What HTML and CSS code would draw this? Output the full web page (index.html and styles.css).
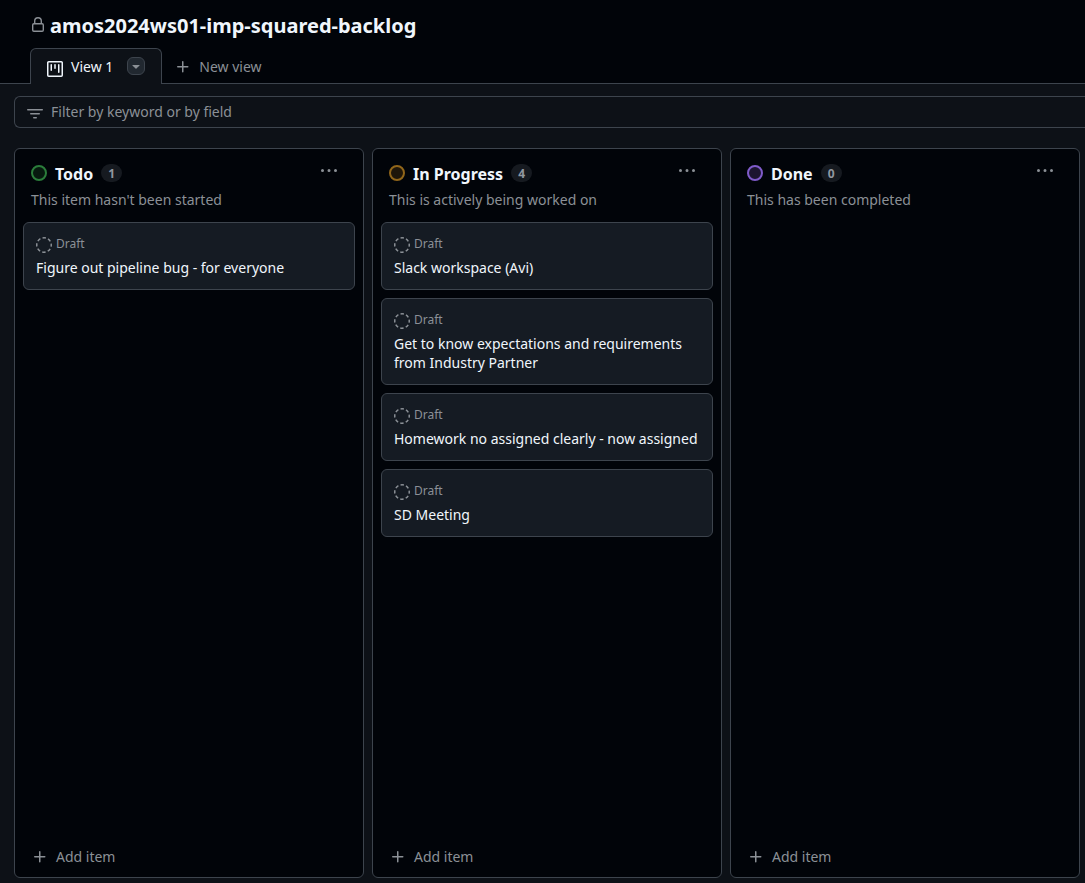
FILE: index.html
```html
<!DOCTYPE html>
<html lang="en">
<head>
<meta charset="utf-8">
<meta name="viewport" content="width=device-width, initial-scale=1">
<title>amos2024ws01-imp-squared-backlog</title>
<link rel="stylesheet" href="styles.css">
</head>
<body>
<svg class="sprite" aria-hidden="true">
  <symbol id="plus" viewBox="0 0 16 16"><path d="M7.75 2a.75.75 0 0 1 .75.75V7h4.25a.75.75 0 0 1 0 1.5H8.5v4.25a.75.75 0 0 1-1.5 0V8.5H2.75a.75.75 0 0 1 0-1.5H7V2.75A.75.75 0 0 1 7.75 2Z"/></symbol>
  <symbol id="kebab" viewBox="0 0 16 16"><path d="M8 9a1.5 1.5 0 1 0 0-3 1.5 1.5 0 0 0 0 3ZM1.5 9a1.5 1.5 0 1 0 0-3 1.5 1.5 0 0 0 0 3Zm13 0a1.5 1.5 0 1 0 0-3 1.5 1.5 0 0 0 0 3Z"/></symbol>
  <symbol id="draft" viewBox="0 0 16 16"><circle cx="8" cy="8" r="7.25" fill="none" stroke="currentColor" stroke-width="1.5" stroke-dasharray="3.4 2.294" stroke-dashoffset="1.7"/></symbol>
</svg>
<header class="top">
  <div class="title-row">
    <svg class="icon lock" viewBox="0 0 16 16" role="img" aria-label="Private"><rect x="2.7" y="6.7" width="10.6" height="7.6" rx="1.2"/><path d="M4.7 6.6V4a3.3 3.3 0 0 1 6.6 0v2.6"/></svg>
    <h1 class="title">amos2024ws01-imp-squared-backlog</h1>
  </div>
  <nav class="tabs" aria-label="Views">
    <div class="tab">
      <a class="tab-link" href="#board" aria-current="page">
        <svg class="icon tab-icon" viewBox="0 0 16 16" aria-hidden="true"><path d="M1.75 0h12.5C15.216 0 16 .784 16 1.75v12.5A1.75 1.75 0 0 1 14.25 16H1.75A1.75 1.75 0 0 1 0 14.25V1.75C0 .784.784 0 1.75 0ZM1.5 1.75v12.5c0 .138.112.25.25.25h12.5a.25.25 0 0 0 .25-.25V1.75a.25.25 0 0 0-.25-.25H1.75a.25.25 0 0 0-.25.25ZM11.75 3a.75.75 0 0 1 .75.75v7.5a.75.75 0 0 1-1.5 0v-7.5a.75.75 0 0 1 .75-.75Zm-8.25.75a.75.75 0 0 1 1.5 0v5.5a.75.75 0 0 1-1.5 0ZM8 3a.75.75 0 0 1 .75.75v3.5a.75.75 0 0 1-1.5 0v-3.5A.75.75 0 0 1 8 3Z"/></svg>
        <span>View 1</span>
      </a>
      <button class="view-options" type="button" aria-label="View options"><svg class="icon" viewBox="0 0 16 16" aria-hidden="true"><path d="m4.427 7.427 3.396 3.396a.25.25 0 0 0 .354 0l3.396-3.396A.25.25 0 0 0 11.396 7H4.604a.25.25 0 0 0-.177.427Z"/></svg></button>
    </div>
    <button class="new-view" type="button"><svg class="icon" aria-hidden="true"><use href="#plus"/></svg>New view</button>
  </nav>
</header>
<main class="content" id="board">
  <label class="filter">
    <svg class="icon" viewBox="0 0 16 16" aria-hidden="true"><path d="M.75 3h14.5a.75.75 0 0 1 0 1.5H.75a.75.75 0 0 1 0-1.5ZM3 7.75A.75.75 0 0 1 3.75 7h8.5a.75.75 0 0 1 0 1.5h-8.5A.75.75 0 0 1 3 7.75Zm3 4a.75.75 0 0 1 .75-.75h2.5a.75.75 0 0 1 0 1.5h-2.5a.75.75 0 0 1-.75-.75Z"/></svg>
    <input class="filter-input" type="text" placeholder="Filter by keyword or by field" aria-label="Filter by keyword or by field">
  </label>
  <div class="board">
    <section class="column">
      <header class="column-head">
        <span class="dot green"></span>
        <h2 class="column-title">Todo</h2>
        <span class="count">1</span>
        <button class="menu" type="button" aria-label="Todo options"><svg class="icon" aria-hidden="true"><use href="#kebab"/></svg></button>
      </header>
      <p class="description">This item hasn't been started</p>
      <div class="cards">
        <article class="card">
          <div class="kind"><svg class="icon" aria-hidden="true"><use href="#draft"/></svg>Draft</div>
          <h3 class="card-title">Figure out pipeline bug - for everyone</h3>
        </article>
      </div>
      <button class="add" type="button"><svg class="icon" aria-hidden="true"><use href="#plus"/></svg>Add item</button>
    </section>
    <section class="column">
      <header class="column-head">
        <span class="dot yellow"></span>
        <h2 class="column-title">In Progress</h2>
        <span class="count">4</span>
        <button class="menu" type="button" aria-label="In Progress options"><svg class="icon" aria-hidden="true"><use href="#kebab"/></svg></button>
      </header>
      <p class="description">This is actively being worked on</p>
      <div class="cards">
        <article class="card">
          <div class="kind"><svg class="icon" aria-hidden="true"><use href="#draft"/></svg>Draft</div>
          <h3 class="card-title">Slack workspace (Avi)</h3>
        </article>
        <article class="card">
          <div class="kind"><svg class="icon" aria-hidden="true"><use href="#draft"/></svg>Draft</div>
          <h3 class="card-title">Get to know expectations and requirements from Industry Partner</h3>
        </article>
        <article class="card">
          <div class="kind"><svg class="icon" aria-hidden="true"><use href="#draft"/></svg>Draft</div>
          <h3 class="card-title">Homework no assigned clearly - now assigned</h3>
        </article>
        <article class="card">
          <div class="kind"><svg class="icon" aria-hidden="true"><use href="#draft"/></svg>Draft</div>
          <h3 class="card-title">SD Meeting</h3>
        </article>
      </div>
      <button class="add" type="button"><svg class="icon" aria-hidden="true"><use href="#plus"/></svg>Add item</button>
    </section>
    <section class="column">
      <header class="column-head">
        <span class="dot purple"></span>
        <h2 class="column-title">Done</h2>
        <span class="count">0</span>
        <button class="menu" type="button" aria-label="Done options"><svg class="icon" aria-hidden="true"><use href="#kebab"/></svg></button>
      </header>
      <p class="description">This has been completed</p>
      <div class="cards"></div>
      <button class="add" type="button"><svg class="icon" aria-hidden="true"><use href="#plus"/></svg>Add item</button>
    </section>
  </div>
</main>
</body>
</html>
```
FILE: styles.css
```css
* {
  box-sizing: border-box;
}

body {
  --canvas: #0d1117;
  --inset: #010409;
  --border: #3d444d;
  --text: #f0f6fc;
  --muted: #8b9096;
  display: flex;
  flex-direction: column;
  min-height: 100vh;
  margin: 0;
  background: var(--canvas);
  color: var(--text);
  font: 14px/20px "Noto Sans", sans-serif;
}

h1,
h2,
h3,
p {
  margin: 0;
}

button {
  padding: 0;
  border: 0;
  background: none;
  color: var(--muted);
  font: inherit;
  cursor: pointer;
}

.sprite {
  display: none;
}

.icon {
  flex: none;
  width: 16px;
  height: 16px;
  fill: currentColor;
}

.lock {
  margin-bottom: 2px;
  fill: none;
  stroke: var(--muted);
  stroke-width: 1.4;
}

.top {
  padding: 10px 30px 0;
  background: var(--inset);
  box-shadow: inset 0 -1px var(--border);
}

.title-row {
  display: flex;
  align-items: center;
  gap: 4px;
  height: 32px;
}

.title {
  font-size: 20px;
  font-weight: 700;
  line-height: 32px;
}

.tabs {
  display: flex;
  gap: 13px;
  margin-top: 6px;
}

.tab {
  display: flex;
  align-items: center;
  gap: 14px;
  height: 36px;
  padding: 0 16px;
  border: 1px solid var(--border);
  border-bottom: 0;
  border-radius: 6px 6px 0 0;
  background: var(--canvas);
}

.tab-link {
  display: flex;
  gap: 8px;
  color: inherit;
  text-decoration: none;
}

.tab-icon {
  margin-top: 4px;
}

.view-options {
  display: flex;
  align-items: center;
  justify-content: center;
  width: 18px;
  height: 18px;
  margin-bottom: 2px;
  border: 1px solid var(--border);
  border-radius: 6px;
  background: #212830;
}

.new-view {
  display: flex;
  align-items: center;
  gap: 8px;
  height: 36px;
  padding-top: 2px;
}

.content {
  display: flex;
  flex: 1;
  flex-direction: column;
  gap: 20px;
  padding: 12px 0 5px 14px;
}

.filter {
  display: flex;
  align-items: center;
  gap: 8px;
  height: 32px;
  padding-left: 12px;
  border: 1px solid var(--border);
  border-right: 0;
  border-radius: 6px 0 0 6px;
  color: var(--muted);
}

.filter .icon {
  margin-top: 3px;
}

.filter-input {
  flex: 1;
  min-width: 0;
  padding: 0;
  border: 0;
  outline: 0;
  background: none;
  color: var(--text);
  font: inherit;
}

.filter-input::placeholder {
  color: var(--muted);
  opacity: 1;
}

.board {
  display: flex;
  flex: 1;
  gap: 8px;
  padding-right: 5px;
}

.column {
  display: flex;
  flex: 1 0 320px;
  flex-direction: column;
  border: 1px solid var(--border);
  border-radius: 6px;
  background: var(--inset);
}

.column-head {
  display: flex;
  align-items: center;
  gap: 8px;
  height: 40px;
  padding: 8px 26px 0 16px;
}

.dot {
  width: 16px;
  height: 16px;
  border: 2px solid;
  border-radius: 50%;
}

.green {
  border-color: #2b7d3b;
  background: #07190f;
}

.yellow {
  border-color: #91661a;
  background: #1e160a;
}

.purple {
  border-color: #7f5bc9;
  background: #1c1530;
}

.column-title {
  padding-top: 2px;
  font-size: 16px;
  font-weight: 700;
  line-height: 24px;
}

.count {
  min-width: 20px;
  padding: 2px 7px 0;
  border-radius: 9px;
  background: #161a20;
  color: #9198a1;
  font-size: 12px;
  font-weight: 700;
  line-height: 16px;
}

.menu {
  display: flex;
  align-self: flex-start;
  margin-left: auto;
  padding-top: 6px;
}

.description {
  padding: 1px 16px 12px;
  color: var(--muted);
}

.cards {
  display: flex;
  flex: 1;
  flex-direction: column;
  gap: 8px;
  padding: 0 8px;
}

.card {
  padding: 11px 12px 12px;
  border: 1px solid var(--border);
  border-radius: 6px;
  background: #151b23;
}

.kind {
  display: flex;
  gap: 4px;
  height: 20px;
  margin-bottom: 4px;
  color: var(--muted);
  font-size: 12px;
}

.kind .icon {
  margin-top: 3px;
}

.card-title {
  font-size: 14px;
  font-weight: 400;
  line-height: 19px;
}

.add {
  display: flex;
  align-items: center;
  gap: 8px;
  height: 40px;
  padding: 0 17px;
}
```
